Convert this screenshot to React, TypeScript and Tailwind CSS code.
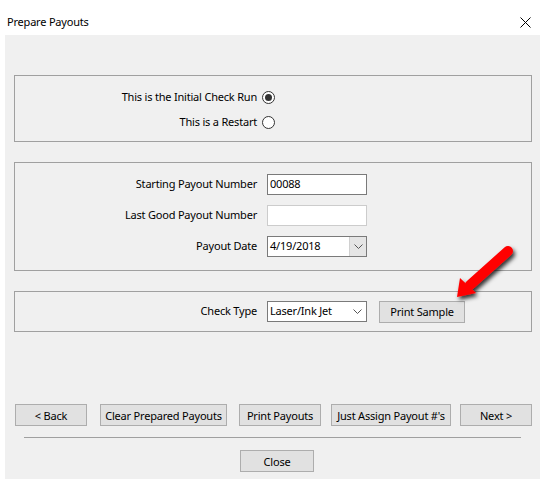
import React from "react";

const font = { fontFamily: '"Noto Sans", "Open Sans", sans-serif' };

const RadioDot = ({ checked }: { checked?: boolean }) => (
  <span className="flex h-[13px] w-[13px] items-center justify-center rounded-full border border-[#333333] bg-white">
    {checked && <span className="h-[7px] w-[7px] rounded-full bg-[#333333]" />}
  </span>
);

const Chevron = () => (
  <svg width="9" height="5" viewBox="0 0 9 5" className="block">
    <path d="M0.5 0.5 L4.5 4.5 L8.5 0.5" fill="none" stroke="#555" strokeWidth="1" />
  </svg>
);

const Button = ({ label, w }: { label: string; w: string }) => (
  <button
    className={`flex h-[22px] items-center justify-center whitespace-nowrap border border-[#adadad] bg-[#e1e1e1] text-[11px] leading-none tracking-[-0.2px] text-black ${w}`}
  >
    {label}
  </button>
);

const FieldRow = ({ label, children }: { label: string; children: React.ReactNode }) => (
  <div className="flex h-[21px] items-center">
    <span className="w-[242px] text-right">{label}</span>
    <div className="ml-[10px]">{children}</div>
  </div>
);

export default function App() {
  return (
    <div
      className="flex h-[479px] w-[545px] flex-col bg-white text-[11px] tracking-[-0.2px] text-black"
      style={font}
    >
      {/* title bar */}
      <div className="flex h-[35px] items-center justify-between pl-[7px] pr-[14px] pt-[9px]">
        <span className="text-[11px]">Prepare Payouts</span>
        <svg width="11" height="11" viewBox="0 0 11 11">
          <path d="M0.5 0.5 L10.5 10.5 M10.5 0.5 L0.5 10.5" stroke="#000" strokeWidth="1" />
        </svg>
      </div>

      <div className="mx-[5px] flex flex-1 flex-col bg-[#f0f0f0] pl-[9px] pr-[8px] pt-[40px]">
        {/* run type */}
        <div className="flex h-[67px] flex-col gap-[5px] border border-[#a0a0a0] pt-[11px]">
          <div className="flex h-[20px] items-center">
            <span className="w-[242px] text-right">This is the Initial Check Run</span>
            <span className="ml-[5px]">
              <RadioDot checked />
            </span>
          </div>
          <div className="flex h-[20px] items-center">
            <span className="w-[242px] text-right">This is a Restart</span>
            <span className="ml-[5px]">
              <RadioDot />
            </span>
          </div>
        </div>

        {/* payout numbers */}
        <div className="mt-[20px] flex h-[109px] flex-col gap-[10px] border border-[#a0a0a0] pt-[11px]">
          <FieldRow label="Starting Payout Number">
            <div className="flex h-[21px] w-[100px] items-center border border-[#7a7a7a] bg-white pl-[2px]">00088</div>
          </FieldRow>
          <FieldRow label="Last Good Payout Number">
            <div className="h-[21px] w-[100px] border border-[#cccccc] bg-white" />
          </FieldRow>
          <FieldRow label="Payout Date">
            <div className="flex h-[21px] w-[100px] items-center border border-[#7a7a7a] bg-white">
              <span className="flex-1 pl-[2px]">4/19/2018</span>
              <span className="flex h-full w-[17px] items-center justify-center border-l border-[#d0d0d0] bg-[#e5e5e5]">
                <Chevron />
              </span>
            </div>
          </FieldRow>
        </div>

        {/* check type */}
        <div className="mt-[20px] flex h-[41px] items-center border border-[#a0a0a0]">
          <span className="w-[242px] text-right">Check Type</span>
          <div className="ml-[10px] flex h-[21px] w-[100px] items-center border border-[#7a7a7a] bg-white">
            <span className="flex-1 pl-[2px]">Laser/Ink Jet</span>
            <span className="pr-[4px]">
              <Chevron />
            </span>
          </div>
          <div className="ml-[12px]">
            <Button label="Print Sample" w="w-[86px]" />
          </div>
        </div>

        {/* wizard buttons */}
        <div className="ml-[1px] mt-[72px] flex items-center">
          <Button label="< Back" w="w-[72px]" />
          <div className="ml-[13px]">
            <Button label="Clear Prepared Payouts" w="w-[127px]" />
          </div>
          <div className="ml-[12px]">
            <Button label="Print Payouts" w="w-[82px]" />
          </div>
          <div className="ml-[10px]">
            <Button label="Just Assign Payout #'s" w="w-[120px]" />
          </div>
          <div className="ml-[9px]">
            <Button label="Next >" w="w-[72px]" />
          </div>
        </div>

        <div className="ml-[10px] mr-[11px] mt-[11px] h-px bg-[#a0a0a0]" />

        <div className="mt-[12px] flex justify-center pl-[8px]">
          <Button label="Close" w="w-[74px]" />
        </div>
      </div>

      {/* annotation arrow */}
      <svg className="pointer-events-none absolute left-0 top-0" width="545" height="479">
        <defs>
          <filter id="arrowShadow" x="-20%" y="-20%" width="160%" height="160%">
            <feDropShadow dx="2" dy="3" stdDeviation="2" floodColor="#000" floodOpacity="0.8" />
          </filter>
        </defs>
        <g filter="url(#arrowShadow)">
          <line x1="508" y1="251" x2="470" y2="285" stroke="#ff0000" strokeWidth="10" strokeLinecap="round" />
          <polygon points="457,297 460,278 476,293" fill="#ff0000" />
        </g>
      </svg>
    </div>
  );
}
